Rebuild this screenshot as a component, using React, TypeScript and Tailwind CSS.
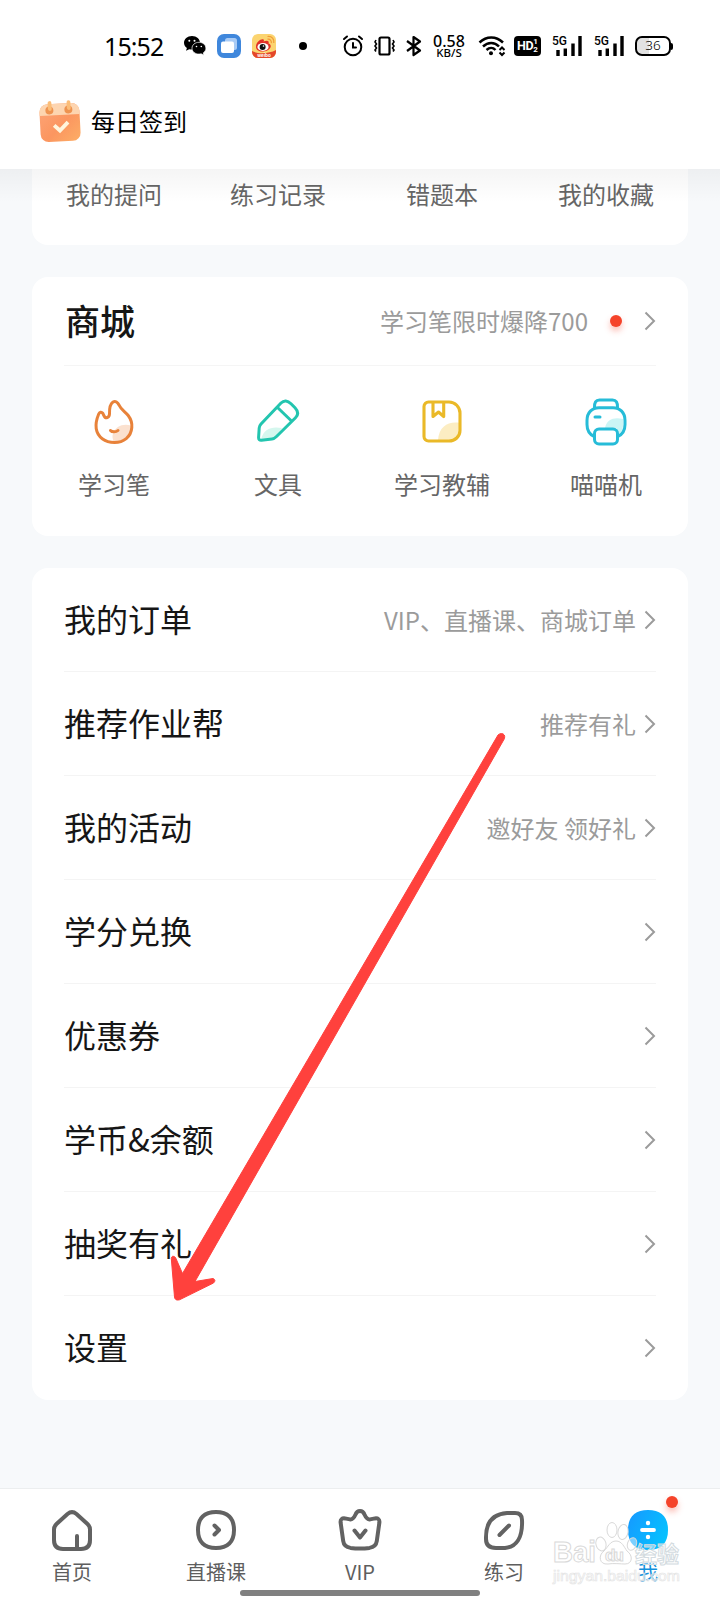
import type { ReactNode } from 'react';

const records = ['我的提问', '练习记录', '错题本', '我的收藏'];

const menu = [
  { title: '我的订单', hint: 'VIP、直播课、商城订单' },
  { title: '推荐作业帮', hint: '推荐有礼' },
  { title: '我的活动', hint: '邀好友 领好礼' },
  { title: '学分兑换' },
  { title: '优惠券' },
  { title: '学币&余额' },
  { title: '抽奖有礼' },
  { title: '设置' },
];

function Chevron() {
  return (
    <svg width="12" height="20" viewBox="0 0 12 20" fill="none" stroke="#9b9b9b" strokeWidth="2">
      <path d="M1.500 1.500 10 10l-8.500 8.500" />
    </svg>
  );
}

function SignalBars() {
  return (
    <div className="relative h-[22px] w-[30px]">
      <span className="absolute left-0 top-0 text-[12px] font-medium leading-[12px] [font-family:Roboto,sans-serif]">5G</span>
      <svg className="absolute inset-0" width="30" height="22" viewBox="0 0 30 22" stroke="#000" strokeWidth="3.400">
        <path d="M6 15v6M13.300 13.500v7.500M21 8.500v12.500M28 1v20" />
      </svg>
    </div>
  );
}

function StatusBar() {
  return (
    <div className="flex h-[92px] items-center pl-[104px]">
      <span className="w-[62px] text-[25px] leading-none tracking-[-0.9px] [font-family:'Noto_Sans',sans-serif]">15:52</span>
      <svg className="ml-[17px]" width="24" height="22" viewBox="0 0 24 22">
        <path d="M9 1C4.300 1 1 4.100 1 7.800c0 2.100 1.100 4 2.900 5.200L3 15.800l3.300-1.600c.8.2 1.700.4 2.700.4 4.700 0 8-3.100 8-6.800S13.700 1 9 1z" fill="#000" />
        <path d="M16 7.300c-4 0-7 2.600-7 5.900s3 5.900 7 5.900c.8 0 1.500-.1 2.200-.3l2.700 1.400-.7-2.300c1.700-1.100 2.700-2.800 2.700-4.700 0-3.300-3-5.900-6.900-5.900z" fill="#000" stroke="#fff" strokeWidth="0.700" />
        <circle cx="6.300" cy="5.800" r="1" fill="#fff" />
        <circle cx="11.500" cy="5.800" r="1" fill="#fff" />
        <circle cx="13.500" cy="11.500" r=".8" fill="#fff" />
        <circle cx="18.300" cy="11.500" r=".8" fill="#fff" />
      </svg>
      <svg className="ml-[10px]" width="24" height="24" viewBox="0 0 24 24">
        <rect width="24" height="24" rx="7" fill="#3f87dc" />
        <rect x="8" y="4" width="12" height="12" rx="2.500" fill="#a9cbf5" />
        <rect x="4" y="7.500" width="13" height="11.500" rx="2" fill="#fff" />
      </svg>
      <svg className="ml-[11px]" width="24" height="24" viewBox="0 0 24 24">
        <rect width="24" height="24" rx="6" fill="#fbd470" />
        <path d="M0 17c5 3 17 3 24-1v2a6 6 0 0 1-6 6H6a6 6 0 0 1-6-6z" fill="#e4472a" />
        <path d="M4 13c0-5 5-8.500 7.500-7.500 1 .5 0 2 0 2 4-1.500 6-.5 5 2 4 1 3 7-5 8-4 .5-7.500-1.500-7.500-4.500z" fill="#e22f26" />
        <ellipse cx="11" cy="13" rx="5.600" ry="3.900" fill="#fff" />
        <circle cx="10.600" cy="13" r="3" fill="#111" />
        <circle cx="11.500" cy="12" r=".8" fill="#fff" />
        <path d="M15.500 5.200c2.500-.5 4.300 1.500 3.800 4M15.500 2.500c4.500-.5 7 2.500 6.300 6.500" fill="none" stroke="#f29a35" strokeWidth="1.200" />
        <text x="12" y="22.500" textAnchor="middle" fontSize="4.500" fontWeight="bold" fill="#fff">weibo</text>
      </svg>
      <span className="ml-[23px] size-2 rounded-full bg-black" />
      <svg className="ml-[35px]" width="22" height="22" viewBox="0 0 22 22" fill="none" stroke="#000" strokeWidth="2" strokeLinecap="round">
        <circle cx="11" cy="12" r="8.300" />
        <path d="M11 8v4.500h3M2 4l3-2.500M20 4l-3-2.500" />
      </svg>
      <svg className="ml-[9px]" width="23" height="22" viewBox="0 0 23 22" fill="none" stroke="#000" strokeWidth="2.200">
        <rect x="6.500" y="2.500" width="10" height="17" rx="1.500" />
        <path d="m3 5-1 2 1.500 2L2 11l1.500 2L2 15l1 1.500M20 5l1 2-1.500 2 1.500 2-1.500 2 1.500 2-1 1.500" strokeWidth="1.600" />
      </svg>
      <svg className="ml-[9px]" width="18" height="22" viewBox="0 0 18 22" fill="none" stroke="#000" strokeWidth="2.200" strokeLinejoin="round">
        <path d="m2 6 13 9.500-6.500 4.500V2L15 6.500 2 16" />
      </svg>
      <div className="ml-[9px] flex w-[34px] flex-col items-center font-medium [font-family:'Noto_Sans',sans-serif]">
        <span className="text-[16px] leading-[12px]">0.58</span>
        <span className="text-[11.500px] leading-[11px]">KB/S</span>
      </div>
      <svg className="ml-[12px]" width="28" height="22" viewBox="0 0 28 22" fill="none" stroke="#000" strokeWidth="2.500">
        <path d="M1.500 7.500c7-6.700 16.500-6.700 23.500 0M5 11.500c5-4.700 11.500-4.700 16 0M8.500 15c3-2.700 6.500-2.700 9 0" />
        <circle cx="13" cy="18.200" r="2" fill="#000" stroke="none" />
        <path d="m21.500 15 2.500-2.500 2.500 2.500M21.500 17.500l2.500 2.500 2.500-2.500" strokeWidth="2" />
      </svg>
      <div className="ml-[8px] flex h-5 w-[27px] items-center justify-center rounded-[4px] bg-black text-white [font-family:Roboto,sans-serif]">
        <span className="text-[12.500px] font-bold leading-none tracking-tight">HD</span>
        <span className="flex flex-col text-[8px] font-bold leading-[8px]">
          <span>1</span>
          <span>2</span>
        </span>
      </div>
      <div className="ml-[11px]"><SignalBars /></div>
      <div className="ml-[12px]"><SignalBars /></div>
      <div className="ml-[11px] flex items-center">
        <div className="flex h-5 w-[36px] items-center justify-center rounded-[7px] border-2 border-black bg-[linear-gradient(90deg,#e2e2e2_36%,#fff_36%)] text-[13.500px] font-light leading-none [font-family:'Noto_Sans',sans-serif]">36</div>
        <span className="h-[7px] w-[2px] rounded-r bg-black" />
      </div>
    </div>
  );
}

function CalendarIcon() {
  return (
    <svg width="42" height="43" viewBox="0 0 42 43">
      <defs>
        <linearGradient id="cal" x1="0" y1="0" x2="1" y2="1">
          <stop offset="0" stopColor="#fda578" />
          <stop offset="0.55" stopColor="#fb9660" />
          <stop offset="1" stopColor="#fdae66" />
        </linearGradient>
      </defs>
      <g transform="rotate(-3 21 22)">
        <rect x="1" y="3.500" width="40" height="38" rx="8" fill="url(#cal)" />
        <path d="M1 15v-4a8 8 0 0 1 8-7.500h24a8 8 0 0 1 8 7.500v4z" fill="#fdd5b0" />
        <circle cx="11" cy="10" r="4" fill="#ee9350" />
        <circle cx="30" cy="10" r="4" fill="#ee9350" />
        <path d="M11.500 2.500v6M30.500 2.500v6" stroke="#fbbd78" strokeWidth="3.800" strokeLinecap="round" />
        <path d="m15 25 5.500 5.500 8.500-8" fill="none" stroke="#fff5dc" strokeWidth="3.800" />
      </g>
    </svg>
  );
}

const shop: { label: string; icon: ReactNode }[] = [
  {
    label: '学习笔',
    icon: (
      <svg width="48" height="48" viewBox="0 0 48 48" fill="none" stroke="#e8823a" strokeWidth="3" strokeLinecap="round" strokeLinejoin="round">
        <path d="M41 27.500c-8-2.500-15.500 1-18 8-1 3-.5 5.500 1 8.500 9-.5 17-7 17-16.500z" fill="#fbe1cf" stroke="none" />
        <path d="M19.500 16c-.2-6 .5-10 3.500-12 2.500-1.300 4.700.2 6 3 2 4.700 6.500 7 9.200 10.500 2.800 3.700 4 7.500 3.600 12C41 39 33.500 44.500 24.500 44.500c-9.500 0-17-5.500-18.300-14-.7-5 .4-9.500 2.500-14.500.8-2 2.700-2.500 4.100-.8 1.300 2.300 1.300 5 3.900 4.600 2-.5 2.700-1.800 2.800-3.800z" />
        <path d="M20.500 32.500c1.500 1.800 5.500 1.800 7.500 0" />
      </svg>
    ),
  },
  {
    label: '文具',
    icon: (
      <svg width="48" height="48" viewBox="0 0 48 48" fill="none" stroke="#23c5af" strokeWidth="3" strokeLinejoin="round">
        <path d="M7 41c3-10 10-13 21-11L19 41z" fill="#d5f7ee" stroke="none" />
        <path d="M27 5c3-3 6.500-2.800 10 .8l4 4c3 3.200 3.500 7 .5 10L22.500 38.500c-1.200 1.200-2.700 2.300-4.500 2.500L7.500 42.200c-2 .2-3-.8-2.900-2.800L5.200 30c.1-1.500.6-2.700 1.800-4z" />
        <path d="m23.500 9.500 14 13.500" />
      </svg>
    ),
  },
  {
    label: '学习教辅',
    icon: (
      <svg width="48" height="48" viewBox="0 0 48 48" fill="none" stroke="#eab928" strokeWidth="3.100" strokeLinejoin="round">
        <path d="M42 25c-11-2-21 3-22 17h12c6 0 10-4 10-10z" fill="#fcedc2" stroke="none" />
        <path d="M10.500 4H31c6 0 11 5 11 11v17.500c0 6-5 10.500-11 10.500H10.500a4.500 4.500 0 0 1-4.500-4.500v-30A4.500 4.500 0 0 1 10.500 4z" />
        <path d="M15 4.500v14l5.500-4.500 5.200 4.500v-14" />
      </svg>
    ),
  },
  {
    label: '喵喵机',
    icon: (
      <svg width="48" height="48" viewBox="0 0 48 48" fill="none" stroke="#26bcd8" strokeWidth="3" strokeLinecap="round">
        <path d="M41 21c-9-2-16 0-18 9h12v7c4-2 6-5 6-9z" fill="#cbf5f5" stroke="none" />
        <path d="M12.500 9.500c-.2-5 1.300-7.500 5-7.500h13c3.700 0 5.200 2.500 5 7.500" />
        <path d="M12 38.500c-5-2.500-7-6.500-7-12v-4C5 14.500 10 9.700 17 9.700h14c7 0 12 4.800 12 12.800v4c0 5.500-2 9.500-7 12" />
        <rect x="12.500" y="31" width="23" height="15" rx="4.500" fill="#fff" />
        <path d="M13 19h5" />
      </svg>
    ),
  },
];

const tabs: { label: string; icon: ReactNode }[] = [
  {
    label: '首页',
    icon: <path d="M15.500 4c3-2.500 6-2.500 9 0l11 10c1.600 1.500 2.500 3.200 2.500 5.500V30c0 6-3 9-9 9H11c-6 0-9-3-9-9V19.500C2 17.200 2.900 15.500 4.500 14zM25 26v12" />,
  },
  {
    label: '直播课',
    icon: <path d="M20 2c11.500 0 18 6 18 18s-6.500 18-18 18S2 32 2 20 8.500 2 20 2zM18.500 15.500l4.500 4.500-4.500 4.500" />,
  },
  {
    label: 'VIP',
    icon: <path d="M15.500 4.500c1.700-4.700 7.300-4.700 9 0 1.700 3.800 3 5.200 5.500 4.900l5-1c3-.4 4.700 1 4.400 4L36.800 31c-.6 4.400-3 6.200-7.300 6.900-6.500.8-12.500.8-19 0-4.300-.7-6.700-2.500-7.300-6.900L.6 12.400c-.3-3 1.400-4.400 4.400-4l5 1c2.500.3 3.800-1.100 5.500-4.900zM14.500 20.500l5.500 7 5.500-7" />,
  },
  {
    label: '练习',
    icon: <path d="M23 3h8c4.500 0 7 2.500 7 7 .8 18-6 27-17 28h-9c-6.500 0-10-3-10-9C1.500 12 9 4 23 3zM15.500 25l9.500-9.500" />,
  },
];

function Watermark() {
  return (
    <svg className="pointer-events-none absolute right-[38px] top-[30px]" width="132" height="70" viewBox="0 0 132 70" fill="#fff" fillOpacity="0.45" stroke="#d9d9d9" strokeWidth="1" fontFamily="'Liberation Sans', 'Noto Sans CJK SC', sans-serif">
      <ellipse cx="51" cy="25" rx="5" ry="7" transform="rotate(-15 51 25)" />
      <ellipse cx="62" cy="11" rx="5" ry="7.500" />
      <ellipse cx="73" cy="13" rx="5" ry="7.500" transform="rotate(10 73 13)" />
      <ellipse cx="82" cy="25" rx="4.500" ry="6.500" transform="rotate(20 82 25)" />
      <path d="M66 22c6 0 8 6 11 10 6 4 6 13-2 13-4 0-12-1-17 0-9 1-10-9-4-13 4-4 6-10 12-10z" />
      <text x="3" y="42.500" fontSize="29" fontWeight="bold" textLength="43" lengthAdjust="spacingAndGlyphs">Bai</text>
      <text x="55" y="42" fontSize="17" fontWeight="bold" textLength="19">du</text>
      <text x="85" y="42.500" fontSize="22" fontWeight="bold" textLength="44" stroke="#d3dbe0">经验</text>
      <text x="3" y="62" fontSize="14.500" strokeWidth="0.600" stroke="#e3e3e3" textLength="127" lengthAdjust="spacingAndGlyphs">jingyan.baidu.com</text>
    </svg>
  );
}

function TabBar() {
  return (
    <nav className="relative grid h-[112px] grid-cols-5 border-t border-[#eceeef] bg-white pt-[21px] text-xl text-[#5e5e5e]">
      {tabs.map((tab) => (
        <div key={tab.label} className="flex flex-col items-center gap-[7px]">
          <svg className="overflow-visible" width="40" height="40" viewBox="0 0 40 40" fill="none" stroke="#626262" strokeWidth="4" strokeLinecap="round" strokeLinejoin="round">
            {tab.icon}
          </svg>
          <span className="leading-[30px]">{tab.label}</span>
        </div>
      ))}
      <div className="relative flex flex-col items-center gap-[7px] text-[#1290dc]">
        <svg width="40" height="40" viewBox="0 0 40 40">
          <defs>
            <linearGradient id="me" x1="0" y1="0.2" x2="1" y2="0.7">
              <stop offset="0" stopColor="#159bff" />
              <stop offset="1" stopColor="#05c3ff" />
            </linearGradient>
          </defs>
          <path d="M20 0c13 0 20 6.500 20 20s-7 20-20 20S0 33.500 0 20 7 0 20 0z" fill="url(#me)" />
          <path d="M14 20h12" stroke="#fff" strokeWidth="3.800" strokeLinecap="round" />
          <circle cx="20" cy="13" r="2.200" fill="#fff" />
          <circle cx="20" cy="27" r="2.200" fill="#fff" />
        </svg>
        <span className="leading-[30px]">我</span>
        <span className="absolute right-[42px] top-[-14px] size-3 rounded-full bg-[#f5432a] shadow-[0_4px_6px_rgba(245,67,42,0.35)]" />
      </div>
      <Watermark />
      <span className="absolute bottom-[4px] left-[240px] h-[6px] w-[240px] rounded-full bg-[#808080]" />
    </nav>
  );
}

function Arrow() {
  return (
    <svg className="pointer-events-none absolute left-[160px] top-[725px]" width="360" height="585" viewBox="160 725 360 585">
      <path
        d="M498 735 182.500 1273.500 175.500 1257.500Q172 1254.500 171.300 1258.500L174.500 1297Q175 1301 179.500 1299.800L213.500 1283Q216.500 1280 213 1278.500L195 1281.500 504.500 738.500Q505.500 734 501.500 733.500 499.500 733.500 498 735z"
        fill="#ff413d"
        stroke="#ff413d"
        strokeLinejoin="round"
      />
    </svg>
  );
}

export default function App() {
  return (
    <div className="relative flex h-[1600px] w-[720px] flex-col overflow-hidden bg-[#f7f9fb] text-[#161616] [font-family:'Noto_Sans_CJK_SC',sans-serif]">
      <header className="relative z-10 h-[169px] bg-white text-black">
        <StatusBar />
        <div className="flex items-center pl-[39px] pt-[8px]">
          <CalendarIcon />
          <span className="ml-[10px] pb-px text-2xl leading-[42px]">每日签到</span>
        </div>
        <div className="absolute inset-x-0 top-full h-[34px] bg-linear-to-b from-black/4 to-transparent" />
      </header>

      <main className="flex grow flex-col gap-8 px-8">
        <section className="grid h-[76px] grid-cols-4 rounded-b-2xl bg-white pt-[7px] text-center text-2xl leading-[36px] text-[#666]">
          {records.map((name) => (
            <span key={name}>{name}</span>
          ))}
        </section>

        <section className="h-[259px] rounded-2xl bg-white">
          <div className="mx-8 flex h-[89px] items-center border-b border-[#f5f5f5]">
            <h2 className="pb-1 pl-px text-[35px] font-medium leading-none">商城</h2>
            <span className="ml-auto text-2xl text-[#9b9b9b]">学习笔限时爆降700</span>
            <span className="ml-[22px] mr-[22px] size-3 rounded-full bg-[#f5432a] shadow-[0_4px_6px_rgba(245,67,42,0.35)]" />
            <Chevron />
          </div>
          <div className="grid grid-cols-4 pt-[32px]">
            {shop.map((item) => (
              <div key={item.label} className="flex flex-col items-center gap-[20px]">
                {item.icon}
                <span className="text-2xl leading-[36px] text-[#666]">{item.label}</span>
              </div>
            ))}
          </div>
        </section>

        <section className="rounded-2xl bg-white px-8">
          {menu.map((row) => (
            <div key={row.title} className="flex h-[104px] items-center border-b border-[#f4f4f4] last:border-0">
              <span className="pb-1 text-[32px] leading-none">{row.title}</span>
              <span className="ml-auto mr-[8px] text-2xl text-[#9b9b9b]">{row.hint}</span>
              <Chevron />
            </div>
          ))}
        </section>
      </main>

      <TabBar />
      <Arrow />
    </div>
  );
}
